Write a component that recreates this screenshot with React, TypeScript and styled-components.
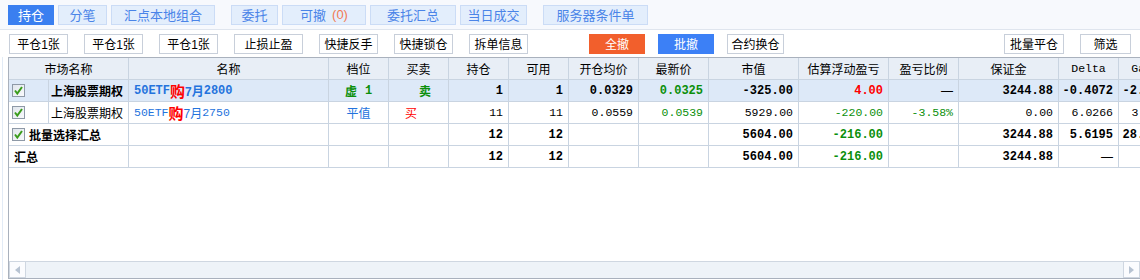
import React from "react";
import styled, { createGlobalStyle } from "styled-components";

const SANS = `"Liberation Sans", "Noto Sans CJK SC", sans-serif`;
const MONO = `"Liberation Mono", "Noto Sans CJK SC", monospace`;
const COLS =
  "40px 80px 200px 60px 60px 60px 60px 70px 70px 90px 90px 70px 100px 60px 60px";

const GREEN = "#0b8f0b";
const RED = "#ff0000";
const BLUE = "#2473dd";
const LINE = "#c9d4e1";

const GlobalStyle = createGlobalStyle`
  html, body { margin: 0; padding: 0; background: #fff; }
  body { font-family: ${SANS}; font-size: 12px; color: #000; }
`;

const Page = styled.div`
  width: 1140px;
  height: 280px;
  overflow: hidden;
  display: flex;
  flex-direction: column;
  background: #fff;
`;

const TabBar = styled.div`
  box-sizing: border-box;
  height: 30px;
  display: flex;
  align-items: center;
  padding-left: 8px;
  gap: 16px;
  background: #f7f9fd;
  border-bottom: 1px solid #dfe5ee;
`;

const TabGroup = styled.div`
  display: flex;
  gap: 4px;
`;

const Tab = styled.div<{ $w: number; $active?: boolean }>`
  box-sizing: border-box;
  width: ${(p) => p.$w}px;
  height: 20px;
  display: flex;
  align-items: center;
  justify-content: center;
  font-size: 13px;
  border: 1px solid ${(p) => (p.$active ? "#3a7ff0" : "#cbdcf6")};
  background: ${(p) => (p.$active ? "#3a7ff0" : "#e3eefc")};
  color: ${(p) => (p.$active ? "#fff" : "#4a84e8")};
`;

const Count = styled.span`
  color: #f27a52;
  margin-left: 6px;
`;

const Toolbar = styled.div`
  height: 27px;
  display: flex;
  align-items: center;
  padding: 0 9px;
`;

const BtnGroup = styled.div<{ $gap: number; $ml?: string }>`
  display: flex;
  gap: ${(p) => p.$gap}px;
  margin-left: ${(p) => p.$ml ?? "0"};
`;

const Btn = styled.div<{ $w: number; $fill?: string }>`
  box-sizing: border-box;
  width: ${(p) => p.$w}px;
  height: 20px;
  display: flex;
  align-items: center;
  justify-content: center;
  font-size: 12px;
  border: 1px solid ${(p) => p.$fill ?? "#c8cfda"};
  background: ${(p) => p.$fill ?? "#fff"};
  color: ${(p) => (p.$fill ? "#fff" : "#000")};
`;

const TableArea = styled.div`
  flex: 1;
  margin-left: 2px;
  padding-left: 5px;
  border-left: 1px solid #e2ebf6;
  display: flex;
  flex-direction: column;
`;

const Panel = styled.div`
  box-sizing: border-box;
  height: 222px;
  display: flex;
  flex-direction: column;
  border-top: 1px solid #a9b1bd;
  border-left: 1px solid #a9b1bd;
  border-bottom: 1px solid #a9b1bd;
`;

const GridView = styled.div`
  flex: 1;
  overflow: hidden;
`;

const Row = styled.div<{ $head?: boolean; $active?: boolean }>`
  display: grid;
  grid-template-columns: ${COLS};
  width: 1170px;
  height: 22px;
  background: ${(p) => (p.$head ? "#e8eef6" : p.$active ? "#dde9f8" : "#fff")};
`;

const Cell = styled.div<{
  $align?: "left" | "center" | "right";
  $bold?: boolean;
  $color?: string;
  $span?: number;
  $mono?: boolean;
  $indent?: number;
}>`
  box-sizing: border-box;
  grid-column: span ${(p) => p.$span ?? 1};
  border-right: 1px solid ${LINE};
  border-bottom: 1px solid ${LINE};
  display: flex;
  align-items: center;
  gap: 4px;
  justify-content: ${(p) =>
    p.$align === "right" ? "flex-end" : p.$align === "center" ? "center" : "flex-start"};
  padding: 0 5px 0 ${(p) => p.$indent ?? 5}px;
  white-space: nowrap;
  overflow: hidden;
  font-family: ${(p) => (p.$mono ? MONO : SANS)};
  font-size: ${(p) => (p.$mono && !p.$bold ? "11.5px" : "12px")};
  font-weight: ${(p) => (p.$bold ? 700 : 400)};
  color: ${(p) => p.$color ?? "#000"};
`;

const Mono = styled.span<{ $bold?: boolean }>`
  font-family: ${MONO};
  font-size: ${(p) => (p.$bold ? "12px" : "11.5px")};
`;

const Grade = styled.span`
  display: flex;
  align-items: center;
  gap: 8px;
`;

const Gou = styled.span`
  font-family: ${SANS};
  font-size: 15px;
  font-weight: 700;
  color: ${RED};
`;

const Name = styled.span<{ $bold?: boolean }>`
  color: ${BLUE};
  font-weight: ${(p) => (p.$bold ? 700 : 400)};
  display: flex;
  align-items: center;
`;

const Scrollbar = styled.div`
  box-sizing: border-box;
  height: 17px;
  display: flex;
  justify-content: space-between;
  background: #eef3f8;
  border-top: 1px solid #cfd7e1;
`;

const ScrollBtn = styled.div`
  box-sizing: border-box;
  width: 17px;
  height: 16px;
  display: flex;
  align-items: center;
  justify-content: center;
  background: #fbfcfe;
  border: 1px solid #cfd7e1;
  border-top: none;
`;

const CheckBox = () => (
  <svg width="13" height="13" viewBox="0 0 13 13">
    <defs>
      <linearGradient id="cbg" x1="0" y1="0" x2="1" y2="1">
        <stop offset="0" stopColor="#dfe5ec" />
        <stop offset="1" stopColor="#fafbfd" />
      </linearGradient>
    </defs>
    <rect x="0.5" y="0.5" width="12" height="12" fill="url(#cbg)" stroke="#8e99a7" />
    <path d="M3 6.5 L5.3 9.5 L10 3" fill="none" stroke="#3a9c1c" strokeWidth="2" />
  </svg>
);

const Arrow = ({ dir }: { dir: "left" | "right" }) => (
  <svg width="5" height="8" viewBox="0 0 5 8">
    <path d={dir === "left" ? "M5 0 L0 4 L5 8 Z" : "M0 0 L5 4 L0 8 Z"} fill="#b7c3d2" />
  </svg>
);

const headers = [
  "名称",
  "档位",
  "买卖",
  "持仓",
  "可用",
  "开仓均价",
  "最新价",
  "市值",
  "估算浮动盈亏",
  "盈亏比例",
  "保证金",
];

export default function App() {
  return (
    <Page>
      <GlobalStyle />
      <TabBar>
        <TabGroup>
          <Tab $w={46} $active>持仓</Tab>
          <Tab $w={49}>分笔</Tab>
          <Tab $w={104}>汇点本地组合</Tab>
        </TabGroup>
        <TabGroup>
          <Tab $w={47}>委托</Tab>
          <Tab $w={84}>
            可撤<Count>(0)</Count>
          </Tab>
          <Tab $w={86}>委托汇总</Tab>
          <Tab $w={67}>当日成交</Tab>
        </TabGroup>
        <TabGroup>
          <Tab $w={105}>服务器条件单</Tab>
        </TabGroup>
      </TabBar>

      <Toolbar>
        <BtnGroup $gap={16}>
          <Btn $w={59}>平仓1张</Btn>
          <Btn $w={59}>平仓1张</Btn>
          <Btn $w={59}>平仓1张</Btn>
          <Btn $w={69}>止损止盈</Btn>
          <Btn $w={59}>快捷反手</Btn>
          <Btn $w={59}>快捷锁仓</Btn>
          <Btn $w={59}>拆单信息</Btn>
        </BtnGroup>
        <BtnGroup $gap={13} $ml="61px">
          <Btn $w={56} $fill="#f25f2c">全撤</Btn>
          <Btn $w={56} $fill="#3c80f6">批撤</Btn>
          <Btn $w={57}>合约换仓</Btn>
        </BtnGroup>
        <BtnGroup $gap={16} $ml="auto">
          <Btn $w={60}>批量平仓</Btn>
          <Btn $w={51}>筛选</Btn>
        </BtnGroup>
      </Toolbar>

      <TableArea>
        <Panel>
          <GridView>
            <Row $head>
              <Cell $span={2} $align="center">市场名称</Cell>
              {headers.map((h) => (
                <Cell key={h} $align="center">{h}</Cell>
              ))}
              <Cell $align="center" $mono>Delta</Cell>
              <Cell $align="center" $mono>Gamma</Cell>
            </Row>

            <Row $active>
              <Cell $indent={3}><CheckBox /></Cell>
              <Cell $align="center" $bold $indent={2}>上海股票期权</Cell>
              <Cell $bold>
                <Name $bold>
                  <Mono $bold>50ETF</Mono>
                  <Gou>购</Gou>7月<Mono $bold>2800</Mono>
                </Name>
              </Cell>
              <Cell $align="center" $bold $color={GREEN}>
                <Grade>
                  虚<Mono $bold>1</Mono>
                </Grade>
              </Cell>
              <Cell $bold $color={GREEN} $indent={30}>卖</Cell>
              <Cell $align="right" $mono $bold>1</Cell>
              <Cell $align="right" $mono $bold>1</Cell>
              <Cell $align="right" $mono $bold>0.0329</Cell>
              <Cell $align="right" $mono $bold $color={GREEN}>0.0325</Cell>
              <Cell $align="right" $mono $bold>-325.00</Cell>
              <Cell $align="right" $mono $bold $color={RED}>4.00</Cell>
              <Cell $align="right">—</Cell>
              <Cell $align="right" $mono $bold>3244.88</Cell>
              <Cell $align="right" $mono $bold>-0.4072</Cell>
              <Cell $align="right" $mono $bold>-2.4131</Cell>
            </Row>

            <Row>
              <Cell $indent={3}><CheckBox /></Cell>
              <Cell $align="center" $indent={2}>上海股票期权</Cell>
              <Cell>
                <Name>
                  <Mono>50ETF</Mono>
                  <Gou>购</Gou>7月<Mono>2750</Mono>
                </Name>
              </Cell>
              <Cell $align="center" $color={BLUE}>平值</Cell>
              <Cell $color={RED} $indent={16}>买</Cell>
              <Cell $align="right" $mono>11</Cell>
              <Cell $align="right" $mono>11</Cell>
              <Cell $align="right" $mono>0.0559</Cell>
              <Cell $align="right" $mono $color={GREEN}>0.0539</Cell>
              <Cell $align="right" $mono>5929.00</Cell>
              <Cell $align="right" $mono $color={GREEN}>-220.00</Cell>
              <Cell $align="right" $mono $color={GREEN}>-3.58%</Cell>
              <Cell $align="right" $mono>0.00</Cell>
              <Cell $align="right" $mono>6.0266</Cell>
              <Cell $align="right" $mono>3.1872</Cell>
            </Row>

            <Row>
              <Cell $span={2} $bold $indent={3}>
                <CheckBox />
                批量选择汇总
              </Cell>
              <Cell />
              <Cell />
              <Cell />
              <Cell $align="right" $mono $bold>12</Cell>
              <Cell $align="right" $mono $bold>12</Cell>
              <Cell />
              <Cell />
              <Cell $align="right" $mono $bold>5604.00</Cell>
              <Cell $align="right" $mono $bold $color={GREEN}>-216.00</Cell>
              <Cell />
              <Cell $align="right" $mono $bold>3244.88</Cell>
              <Cell $align="right" $mono $bold>5.6195</Cell>
              <Cell $align="right" $mono $bold>28.1093</Cell>
            </Row>

            <Row>
              <Cell $span={2} $bold>汇总</Cell>
              <Cell />
              <Cell />
              <Cell />
              <Cell $align="right" $mono $bold>12</Cell>
              <Cell $align="right" $mono $bold>12</Cell>
              <Cell />
              <Cell />
              <Cell $align="right" $mono $bold>5604.00</Cell>
              <Cell $align="right" $mono $bold $color={GREEN}>-216.00</Cell>
              <Cell />
              <Cell $align="right" $mono $bold>3244.88</Cell>
              <Cell $align="right">—</Cell>
              <Cell />
            </Row>
          </GridView>
          <Scrollbar>
            <ScrollBtn><Arrow dir="left" /></ScrollBtn>
            <ScrollBtn><Arrow dir="right" /></ScrollBtn>
          </Scrollbar>
        </Panel>
      </TableArea>
    </Page>
  );
}
